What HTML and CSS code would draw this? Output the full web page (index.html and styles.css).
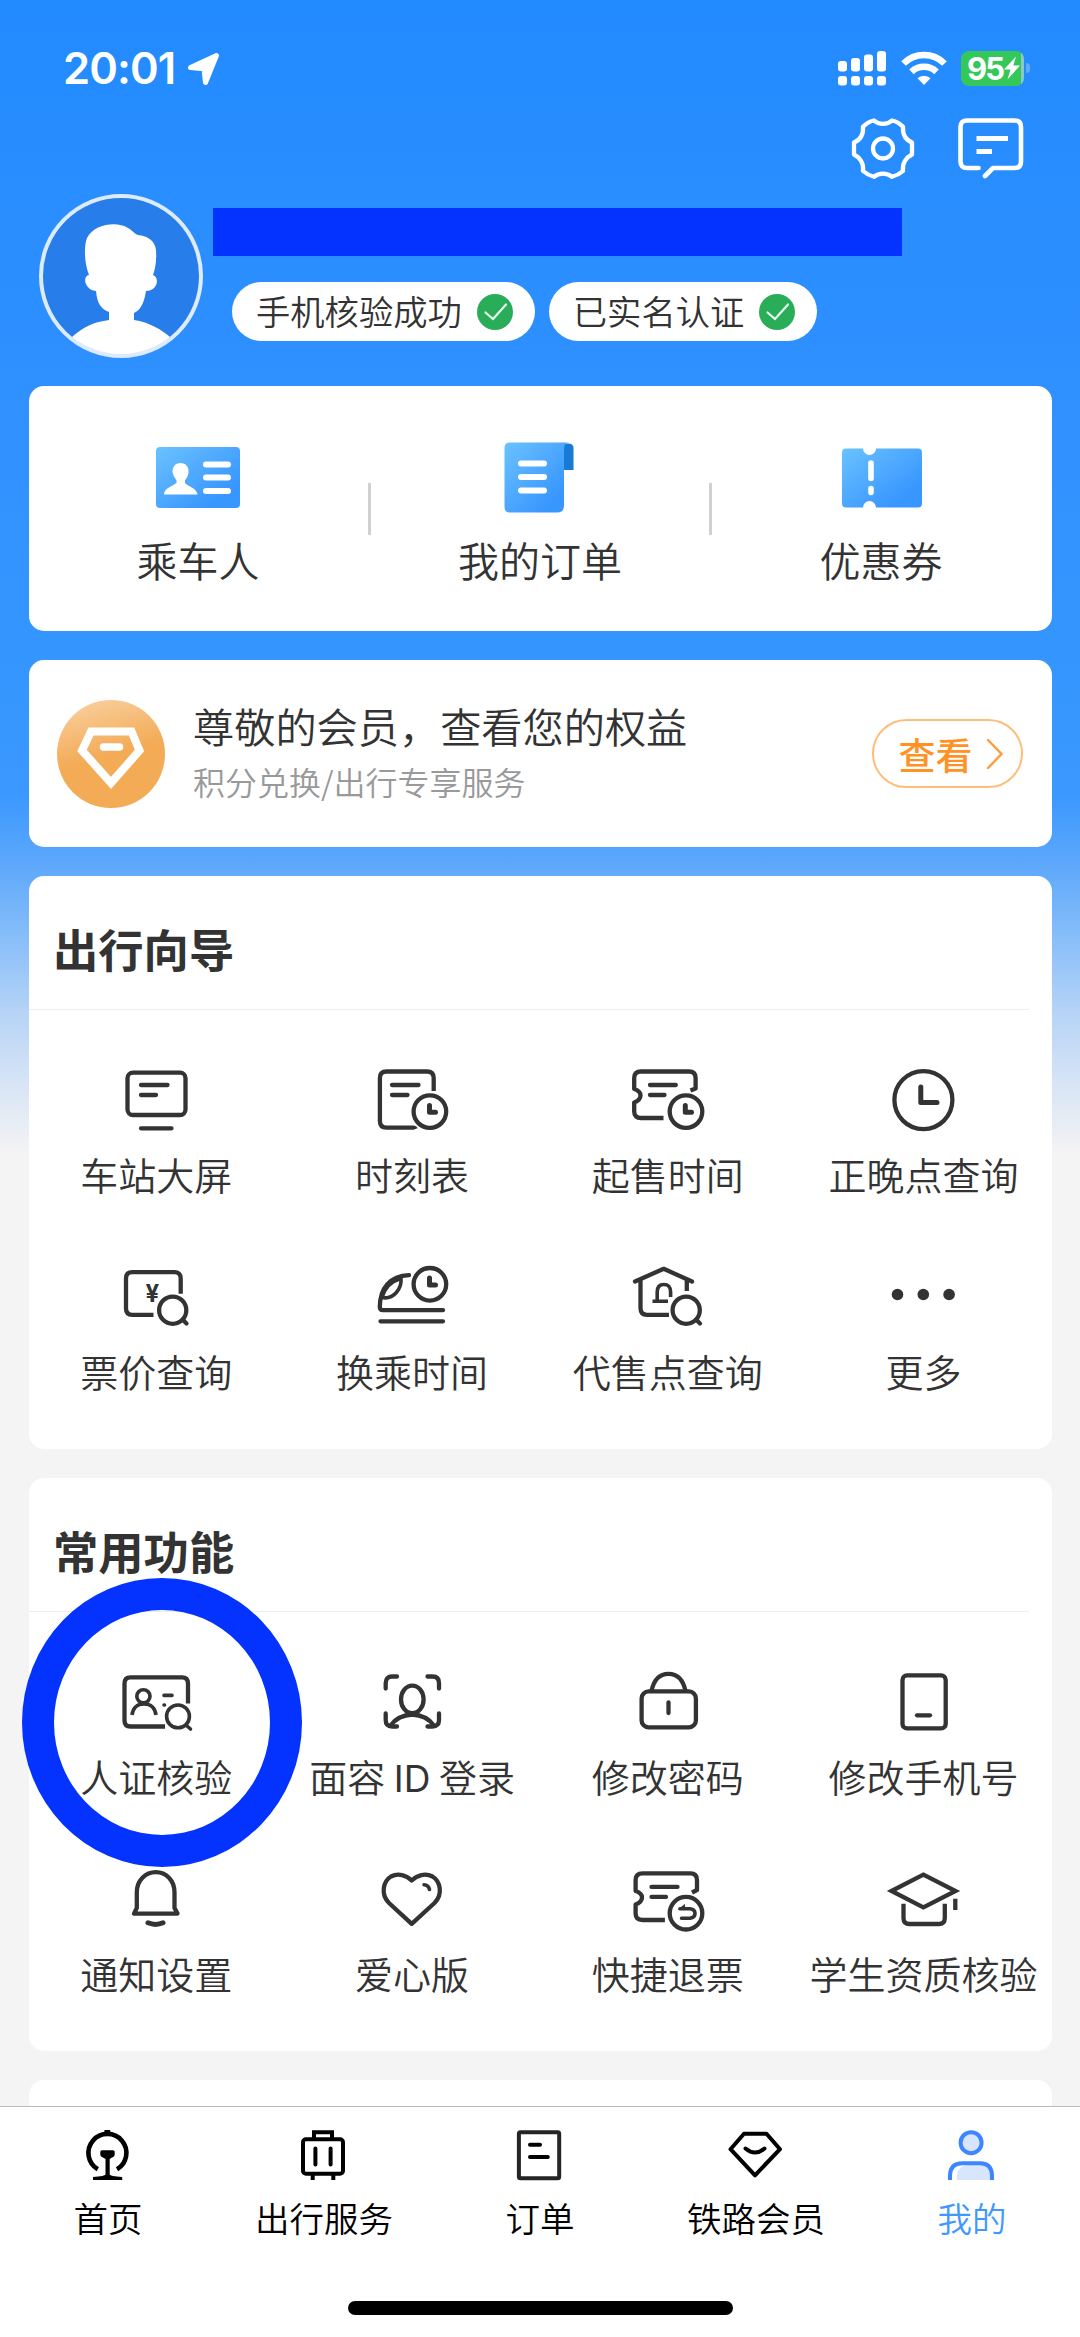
FILE: index.html
```html
<!DOCTYPE html>
<html lang="zh-CN">
<head>
<meta charset="utf-8">
<title>我的</title>
<link rel="stylesheet" href="styles.css">
</head>
<body>
<div class="screen">
  <main class="content">
    <div class="status">
      <span class="time">20:01</span>
      <svg class="locate" width="36" height="36" viewBox="0 0 36 36"><path d="M4.500 16.500 30.500 4.500 19.500 31.500 18 17.800Z" fill="#fff" stroke="#fff" stroke-width="5" stroke-linejoin="round"/></svg>
      <div class="status-right">
        <svg class="signal" width="48" height="36" viewBox="0 0 48 36" fill="#fff">
          <rect x="0" y="11" width="9" height="10.500" rx="3"/><rect x="13" y="8" width="9" height="13.500" rx="3"/><rect x="26" y="4.500" width="9" height="17" rx="3"/><rect x="39" y="1" width="9" height="20.500" rx="3"/>
          <rect x="0" y="26" width="9" height="9.500" rx="3"/><rect x="13" y="26" width="9" height="9.500" rx="3"/><rect x="26" y="26" width="9" height="9.500" rx="3"/><rect x="39" y="26" width="9" height="9.500" rx="3"/>
        </svg>
        <svg class="wifi" width="46" height="34" viewBox="0 0 46 34" fill="none" stroke="#fff" stroke-width="6.500">
          <path d="M2.500 12.500A29 29 0 0 1 43.500 12.500"/><path d="M10.500 20.800A18 18 0 0 1 35.500 20.800"/><path d="M23 34 16.500 27.300A9.500 9.500 0 0 1 29.500 27.300Z" fill="#fff" stroke="none"/>
        </svg>
        <div class="battery"><span>95</span><svg width="16" height="24" viewBox="0 0 16 24"><path d="M12 .5 0 13.500H6.500L3.500 23.500 16 9.500H9.300Z" fill="#fff"/></svg></div>
        <i class="battery-tip"></i>
      </div>
    </div>

    <div class="actions">
      <svg width="64" height="62" viewBox="0 0 64 62" fill="none" stroke="#fff" stroke-width="4.300" stroke-linejoin="round">
        <path d="M23 2.500 C28 7 36 7 41 2.500 Q47.500 4 52 8.800 C51.500 16.500 55 22 61 24.500 V36.500 C55 39.500 51 45.500 52 53 Q47.500 57 41 58.800 C36 54.500 28 54.500 23 58.800 Q16.500 57 12 53 C13 45.500 9 39.500 3 36.500 V24.500 C9 22 12.500 16.500 12 8.800 Q16.500 4 23 2.500Z"/>
        <circle cx="32" cy="30.500" r="10"/>
      </svg>
      <svg width="66" height="62" viewBox="0 0 66 62" fill="none" stroke="#fff" stroke-width="4.600" stroke-linecap="round" stroke-linejoin="round">
        <path d="M20.500 50H9Q2.500 50 2.500 43.500V9Q2.500 2.500 9 2.500H56.500Q63 2.500 63 9V43.500Q63 50 56.500 50H35L27 58"/>
        <path d="M18.500 20.500H50M18.500 33.500H34" stroke-linecap="butt" stroke-width="5"/>
      </svg>
    </div>

    <div class="profile">
      <svg class="avatar" width="164" height="164" viewBox="0 0 164 164">
        <defs><clipPath id="face"><circle cx="82" cy="82" r="80"/></clipPath></defs>
        <circle cx="82" cy="82" r="80" fill="#277de9"/>
        <g clip-path="url(#face)" fill="#fff"><path d="M50 81C45 69 45 51 48 44C55 30 78 27 89 34C94 37 96 40 99 41C109 42 116 47 117 56Q118 70 114 81Q119 83 117.500 90Q115 97 107 97C105 110 101 116 95 119V126C110 128 123 136 131 143Q110 164 82 164Q54 164 33 143C44 133 55 128 70 126V118C62 115 58 109 57 97Q49 96 46.500 89Q45 82 50 81Z"/></g>
        <circle cx="82" cy="82" r="80" fill="none" stroke="#dcebff" stroke-width="4"/>
      </svg>
      <div class="profile-info">
        <div class="name-mask"></div>
        <div class="pills">
          <span class="pill">手机核验成功<svg class="check" width="36" height="36" viewBox="0 0 36 36"><circle cx="18" cy="18" r="18" fill="#29ad58"/><path d="M8.500 18.500 16 25 29 10.500" fill="none" stroke="#e8fff0" stroke-width="2.200" stroke-linecap="round"/></svg></span>
          <span class="pill">已实名认证<svg class="check" width="36" height="36" viewBox="0 0 36 36"><circle cx="18" cy="18" r="18" fill="#29ad58"/><path d="M8.500 18.500 16 25 29 10.500" fill="none" stroke="#e8fff0" stroke-width="2.200" stroke-linecap="round"/></svg></span>
        </div>
      </div>
    </div>

    <div class="cards">
      <section class="card quick">
        <a class="quick-item">
          <svg width="84" height="72" viewBox="0 0 84 72">
            <defs><linearGradient id="sky" x1="0" y1="0" x2="1" y2="1"><stop offset="0" stop-color="#6bc2ff"/><stop offset=".8" stop-color="#3896ff"/></linearGradient></defs>
            <rect x="0" y="5" width="84" height="61" rx="4" fill="url(#sky)"/>
            <path d="M24.500 21C30 21 33 25 32.500 30Q32.500 34 29 38.500V41C31 44 41 46 41.500 52.500H8C8 46 17 44 20.500 41V38.500Q17 34 16.500 30C16.500 25 19 21 24.500 21Z" fill="#fff"/>
            <path d="M50 22.500H72M50 35.500H72M50 49H72" stroke="#fff" stroke-width="6" stroke-linecap="round"/>
          </svg>
          <span>乘车人</span>
        </a>
        <a class="quick-item">
          <svg width="84" height="72" viewBox="0 0 84 72">
            <path d="M66 1.500H71Q75.500 2 75.500 6V28H66Z" fill="#177bd4"/>
            <path d="M12 .5H71Q66 1 66 7V63.500Q66 70.500 59 70.500H12Q6.500 70.500 6.500 65V6Q6.500 .5 12 .5Z" fill="url(#sky)"/>
            <path d="M23 21.500H46M23 35H46M23 48.500H46" stroke="#fff" stroke-width="6" stroke-linecap="round"/>
          </svg>
          <span>我的订单</span>
        </a>
        <a class="quick-item">
          <svg width="84" height="72" viewBox="0 0 84 72">
            <path d="M7 6.500H24A6.300 6.300 0 0 0 37 6.500H79Q83 6.500 83 10.500V61.500Q83 65.500 79 65.500H37A6.300 6.300 0 0 0 24 65.500H7Q3 65.500 3 61.500V10.500Q3 6.500 7 6.500Z" fill="url(#sky)"/>
            <path d="M32 21V36.500M32 46.500V50.500" stroke="#fff" stroke-width="5.600" stroke-linecap="round"/>
          </svg>
          <span>优惠券</span>
        </a>
      </section>

      <section class="card member">
        <svg class="medal" width="108" height="108" viewBox="0 0 108 108">
          <defs><linearGradient id="gold" x1=".38" y1="0" x2=".52" y2=".5"><stop offset="0" stop-color="#f9cc98"/><stop offset="1" stop-color="#f3ab56"/></linearGradient></defs>
          <circle cx="54" cy="54" r="54" fill="url(#gold)"/>
          <path d="M34 31.500H74.500L82.500 50.500 54 83 25 50.500Z" fill="none" stroke="#fff" stroke-width="8"/>
          <path d="M46.500 47H62.500" stroke="#fff" stroke-width="7.500" stroke-linecap="round"/>
        </svg>
        <div class="member-text"><p class="member-title">尊敬的会员，查看您的权益</p><p class="member-sub">积分兑换/出行专享服务</p></div>
        <a class="view">查看<svg width="18" height="32" viewBox="0 0 18 32"><path d="M2 2 15.500 16 2 30" fill="none" stroke="#ff9c3b" stroke-width="2.400" stroke-linecap="round"/></svg></a>
      </section>

      <section class="card panel">
        <h2>出行向导</h2>
        <div class="grid">
          <a class="item"><svg class="icon" viewBox="0 0 80 78"><rect x="11.500" y="10.700" width="58" height="42.300" rx="5.500"/><path d="M25 23H51.500M25 33H40M25 66.300H55.500"/></svg><span>车站大屏</span></a>
          <a class="item"><svg class="icon" viewBox="0 0 80 78"><path class="flat" d="M61.700 29V16Q61.700 9.500 55 9.500H14.500Q7.900 9.500 7.900 16V59Q7.900 65.600 14.500 65.600H41Q43 65.600 43.500 67"/><path d="M20 23H46.500M20 33H35.500"/><circle cx="57.900" cy="49.600" r="16.300"/><path class="hand" d="M57.500 43.500V50.300H63.500"/></svg><span>时刻表</span></a>
          <a class="item"><svg class="icon" viewBox="0 0 80 78"><path class="flat" d="M35.500 56H13Q6.200 56 6.200 49.500V40.500Q12.500 38 12.500 33.500T6.200 27V16Q6.200 9.500 13 9.500H61Q67.600 9.500 67.600 16V26.500L62.500 28.500"/><path d="M22 23H47.800M22 33H36.500"/><circle cx="58" cy="49.600" r="16.300"/><path class="hand" d="M57.300 43.500V50.300H63.500"/></svg><span>起售时间</span></a>
          <a class="item"><svg class="icon" viewBox="0 0 80 78"><circle cx="39.400" cy="38.100" r="29"/><path class="hand" d="M36.800 25V40.500H53"/></svg><span>正晚点查询</span></a>
          <a class="item"><svg class="icon" viewBox="0 0 80 78"><path class="flat" d="M64.700 34.700V19.500Q64.700 13.200 58.500 13.200H16.300Q10 13.200 10 19.500V49.500Q10 55.800 16.300 55.800H37.500"/><circle cx="56.700" cy="51.200" r="13.600"/><path d="M67 61 70.500 64.500"/><text x="36.300" y="43" class="yen">¥</text></svg><span>票价查询</span></a>
          <a class="item"><svg class="icon" viewBox="0 0 80 78"><path d="M37 16.200C18 17 8 29 7.800 48Q7.800 51.200 11 51.200H71M8.500 62.300H71"/><path class="thin" d="M10 38.500C13 28 20 22 29 19.500C30 29 22 41 10 38.500Z"/><circle cx="57.900" cy="25.300" r="16.300"/><path class="hand" d="M57.500 19V26H63.500"/></svg><span>换乘时间</span></a>
          <a class="item"><svg class="icon" viewBox="0 0 80 78"><path d="M7 22.500 35.700 9.800 64 22.500"/><path class="flat" d="M12.500 21V49Q12.500 55.800 19 55.800H41M58.800 20V32"/><path class="flat thin" d="M24.500 42.300H40M29.200 42V33Q29.200 25.500 35.900 25.500T42.600 33V38"/><circle cx="58.200" cy="51.200" r="13.600"/><path d="M68.500 61 72 64.500"/></svg><span>代售点查询</span></a>
          <a class="item"><svg class="icon" viewBox="0 0 80 78"><g class="solid"><circle cx="13.500" cy="35.500" r="5.800"/><circle cx="39.300" cy="35.500" r="5.800"/><circle cx="65.100" cy="35.500" r="5.800"/></g></svg><span>更多</span></a>
        </div>
      </section>

      <section class="card panel">
        <h2>常用功能</h2>
        <div class="grid">
          <a class="item marked"><svg class="icon" viewBox="0 0 80 78"><path class="flat" d="M72 39.400V19.500Q72 13.300 66 13.300H14.500Q8.500 13.300 8.500 19.500V56.500Q8.500 62.500 14.500 62.500H49"/><g class="thin"><circle cx="27.400" cy="32.300" r="6.600"/><path class="flat" d="M16 51Q17.500 40 28 40T40 51"/><path d="M48 31.400H56M48 41H48.500"/><circle cx="62" cy="52.400" r="11.400"/><path d="M70.500 61.500 74.500 65"/></g></svg><span>人证核验</span><i class="ring"></i></a>
          <a class="item"><svg class="icon" viewBox="0 0 80 78"><path d="M25 12.500H20Q13.700 12.500 13.700 19V24.500M55.500 12.500H60.500Q67 12.500 67 19V24.500M13.700 49.500V56Q13.700 62.500 20 62.500H25M67 49.500V56Q67 62.500 60.500 62.500H55.500"/><ellipse cx="40.300" cy="35.400" rx="11.300" ry="13.800"/><path d="M19 61Q26 51.500 40.300 50.500Q54.500 51.500 61.500 61"/></svg><span>面容 <b class="latin">ID</b> 登录</span></a>
          <a class="item"><svg class="icon" viewBox="0 0 80 78"><rect x="13.600" y="27.400" width="54.300" height="36" rx="7"/><path class="flat" d="M23.500 27Q27 9.800 40.500 9.800T57.500 27"/><path d="M40.500 38.500V49"/></svg><span>修改密码</span></a>
          <a class="item"><svg class="icon" viewBox="0 0 80 78"><rect x="18.500" y="11.400" width="43.200" height="53" rx="4.500"/><path d="M33 51.300H46"/></svg><span>修改手机号</span></a>
          <a class="item"><svg class="icon" viewBox="0 0 80 78"><path d="M18 52.600H61.500L58.500 47V31.500C58.500 19 50 11.200 39.800 11.200S20.800 19 20.800 31.500V47Z"/><path class="hand" d="M32 61.800Q39.500 65 47 61.800"/></svg><span>通知设置</span></a>
          <a class="item"><svg class="icon" viewBox="0 0 80 78"><path d="M39.700 62.800 17 42C8 33 11.500 20 19 15.500C26 11.800 34.500 14 39.700 19.500C45 14 53.500 11.800 60.500 15.500C68 20 71.500 33 62.500 42Z"/><path class="thin" d="M52 23.800Q56.500 24 57.500 28.500"/></svg><span>爱心版</span></a>
          <a class="item"><svg class="icon" viewBox="0 0 80 78"><path class="flat" d="M36.900 59H14.500Q7.600 59 7.600 52.500V43.500Q14 41 14 36.500T7.600 30V19Q7.600 12.300 14.500 12.300H62.500Q69 12.300 69 19V29L64 31.500"/><path d="M23.500 25.900H49.500M23.500 35.900H38"/><circle cx="58" cy="52.200" r="16.300"/><path class="thin" d="M52 47.800H62Q67 48.500 67 52.500T62 57.200H53.500"/><path class="solid" d="M49.500 48.500 57 43V48.500Z"/></svg><span>快捷退票</span></a>
          <a class="item"><svg class="icon" viewBox="0 0 80 78"><path class="miter" d="M7.500 30 39.400 13.700 71.500 30 39.400 46.300Z"/><path class="flat" d="M19.500 42.700V57Q19.500 63 25.500 63H54.800Q60.800 63 60.800 57V42.700M71.300 37.700V49"/></svg><span>学生资质核验</span></a>
        </div>
      </section>

      <section class="card next"></section>
    </div>
  </main>

  <nav class="tabbar">
    <div class="tabs">
      <a class="tab"><svg width="60" height="60" viewBox="0 0 60 60"><path d="M19.800 44.300A19 19 0 1 1 39 44.300" fill="none" stroke="#000" stroke-width="4.600"/><path d="M26 9 26.500 5H32L33 9ZM24 25.200H35Q37 25.200 36.700 28.500Q37 31.500 34 32.500L31.700 34V49.500Q32 51 44.200 52V55H15V52Q27 51 27.500 49.500V34L25 32.500Q22 31.500 22.300 28.500Q22 25.200 24 25.200Z"/></svg><span>首页</span></a>
      <a class="tab"><svg width="60" height="60" viewBox="0 0 60 60" fill="none" stroke="#000" stroke-width="4"><rect x="9" y="14.300" width="40" height="34.500" rx="3"/><path d="M20 13V7.200H38V13M18.700 50V55M39.300 50V55"/><path d="M21.400 23.500V39.500M36.600 23.500V39.500" stroke-linecap="round"/></svg><span>出行服务</span></a>
      <a class="tab"><svg width="60" height="60" viewBox="0 0 60 60" fill="none" stroke="#252525" stroke-width="4"><rect x="8.900" y="7.200" width="40.300" height="46" rx="1.500"/><path d="M20 19.700H30M20 32H37.800" stroke="#000" stroke-linecap="round"/></svg><span>订单</span></a>
      <a class="tab"><svg width="60" height="60" viewBox="0 0 60 60" fill="none" stroke="#000" stroke-width="4" stroke-linejoin="round"><path d="M18 8.800H40.500L54 24.200 29 50.300 4.500 24.200Z"/><path d="M19.500 23.500Q29 31.500 38.500 23.500" stroke-linecap="round"/></svg><span>铁路会员</span></a>
      <a class="tab active"><svg width="60" height="60" viewBox="0 0 60 60" fill="none" stroke="#3d86ff" stroke-width="4"><circle cx="29.100" cy="17.700" r="10.500" fill="#d8e5ff"/><path d="M15 55V51Q15.500 41 25.500 40H40Q49 41 49 50V55Z" fill="#d8e5ff" stroke="none"/><path d="M8 55V50Q8.500 38.500 20 38.200H38.500Q49.500 38.500 50 50V55"/></svg><span>我的</span></a>
    </div>
    <div class="home-indicator"></div>
  </nav>
</div>
</body>
</html>
```
FILE: styles.css
```css
* { box-sizing: border-box; }
body {
  margin: 0;
  font-family: "Noto Sans CJK SC", "Noto Sans", sans-serif;
  font-weight: 350;
  color: #333;
}
p, h2 { margin: 0; }
svg { display: block; flex: none; }

.screen {
  width: 1080px;
  height: 2337px;
  display: flex;
  flex-direction: column;
  overflow: hidden;
  background: #f4f4f4 linear-gradient(#228bff 0, #2f90ff 380px, #3797ff 720px, #3b98fe 795px, #5da8fb 865px, #86bdf9 935px, #b4d3f6 1010px, #d8e5f5 1085px, #f4f4f4 1155px) no-repeat;
}
.content {
  flex: 1;
  min-height: 0;
  overflow: hidden;
}

/* Status bar */
.status {
  height: 118px;
  padding: 18px 50px 0 63px;
  display: flex;
  align-items: center;
}
.time {
  width: 123px;
  font: 600 43.500px/50px Inter, sans-serif;
  letter-spacing: -.9px;
  color: #fff;
}
.locate { margin-top: 1px; }
.status-right {
  margin-left: auto;
  display: flex;
  align-items: center;
}
.signal { margin-right: 15px; }
.wifi { margin-right: 14px; }
.battery {
  width: 63px;
  height: 35px;
  border-radius: 8px;
  background: linear-gradient(90deg, #34c759 60px, #8cc8c8 60px);
  display: flex;
  align-items: center;
  padding-left: 6px;
  font: 700 31px/35px Inter, sans-serif;
  letter-spacing: -2px;
  color: #fff;
}
.battery span { width: 37px; }
.battery-tip {
  width: 4px;
  height: 10px;
  margin-left: 2px;
  border-radius: 0 4px 4px 0;
  background: #64acff;
}

.actions {
  height: 60px;
  padding-right: 56px;
  display: flex;
  justify-content: flex-end;
  gap: 43px;
}

/* Profile */
.profile {
  display: flex;
  margin-top: 16px;
  padding-left: 39px;
  gap: 10px;
}
.profile-info { padding-top: 14px; }
.name-mask {
  width: 689px;
  height: 48px;
  background: #0433ff;
}
.pills {
  display: flex;
  gap: 14px;
  margin: 26px 0 0 19px;
}
.pill {
  display: flex;
  align-items: center;
  height: 59px;
  padding: 0 22px 4px 24px;
  border-radius: 30px;
  background: #fff;
  font-size: 34.300px;
  line-height: 54px;
}
.check { margin: 4px 0 0 15px; }

/* Cards */
.cards {
  margin-top: 27.700px;
  padding: 0 28.500px;
  display: flex;
  flex-direction: column;
  gap: 28.600px;
}
.card {
  border-radius: 15px;
  background: #fff;
}
.quick {
  height: 245.600px;
  display: grid;
  grid-template-columns: repeat(3, 1fr);
}
.quick-item {
  position: relative;
  display: flex;
  flex-direction: column;
  align-items: center;
  padding-top: 56px;
  font-size: 41px;
  line-height: 60px;
}
.quick-item span { margin-top: 15.500px; }
.quick-item:first-child { padding-right: 2px; }
.quick-item + .quick-item::before {
  content: "";
  position: absolute;
  left: -2px;
  top: 97px;
  width: 3px;
  height: 52px;
  background: #d0d0d0;
}

.member {
  height: 187.400px;
  display: flex;
  align-items: center;
  padding: 0 29px 0 28.500px;
}
.member-text { margin: -5px 0 0 28px; }
.member-title { font-size: 41.200px; line-height: 60px; }
.member-sub { font-size: 32px; line-height: 52px; color: #999; }
.view {
  margin-left: auto;
  width: 151px;
  height: 69px;
  border: 2px solid #ffbd7a;
  border-radius: 35px;
  display: flex;
  align-items: center;
  padding-left: 25px;
  font-size: 37px;
  font-weight: 500;
  line-height: 60px;
  color: #ff9224;
}
.view svg { margin-left: 13px; }

.panel { height: 573.300px; }
.panel h2 {
  height: 134.500px;
  margin-right: 23px;
  padding: 37px 0 0 24.500px;
  border-bottom: 1.500px solid #eee;
  font-size: 45.300px;
  font-weight: 700;
  line-height: 70px;
}
.grid {
  display: grid;
  grid-template-columns: repeat(4, 1fr);
  grid-auto-rows: 196.500px;
  padding-top: 52px;
}
.item {
  position: relative;
  display: flex;
  flex-direction: column;
  align-items: center;
  font-size: 38px;
  line-height: 56px;
  white-space: nowrap;
}
.item > span { margin-top: 6px; }
.latin { font: 400 37px/1 Inter, sans-serif; }
.ring {
  position: absolute;
  left: -7px;
  top: -86px;
  width: 280px;
  height: 289px;
  border: 32px solid #0433ff;
  border-radius: 50%;
}
.next { height: 120px; }

/* Line icons */
.icon {
  width: 80px;
  height: 78px;
  fill: none;
  stroke: #333;
  stroke-width: 4.300;
  stroke-linecap: round;
  stroke-linejoin: round;
}
.icon .flat { stroke-linecap: butt; }
.icon .thin { stroke-width: 3.600; }
.icon .hand { stroke-width: 5; }
.icon .miter { stroke-linejoin: miter; }
.icon .solid { fill: #333; stroke: none; }
.icon .yen {
  fill: #333;
  stroke: none;
  font: 700 24px Inter, sans-serif;
  text-anchor: middle;
}

/* Tab bar */
.tabbar {
  height: 231px;
  border-top: 1.500px solid #bbb;
  background: #fff;
}
.tabs {
  display: grid;
  grid-template-columns: repeat(5, 1fr);
  padding-top: 18px;
  height: 194px;
}
.tab {
  display: flex;
  flex-direction: column;
  align-items: center;
  font-size: 34.500px;
  line-height: 50px;
  color: #000;
}
.tab span { margin-top: 7px; }
.tab.active { color: #3f98ff; }
.home-indicator {
  width: 385px;
  height: 14px;
  margin: 0 auto;
  border-radius: 7px;
  background: #000;
}
```
